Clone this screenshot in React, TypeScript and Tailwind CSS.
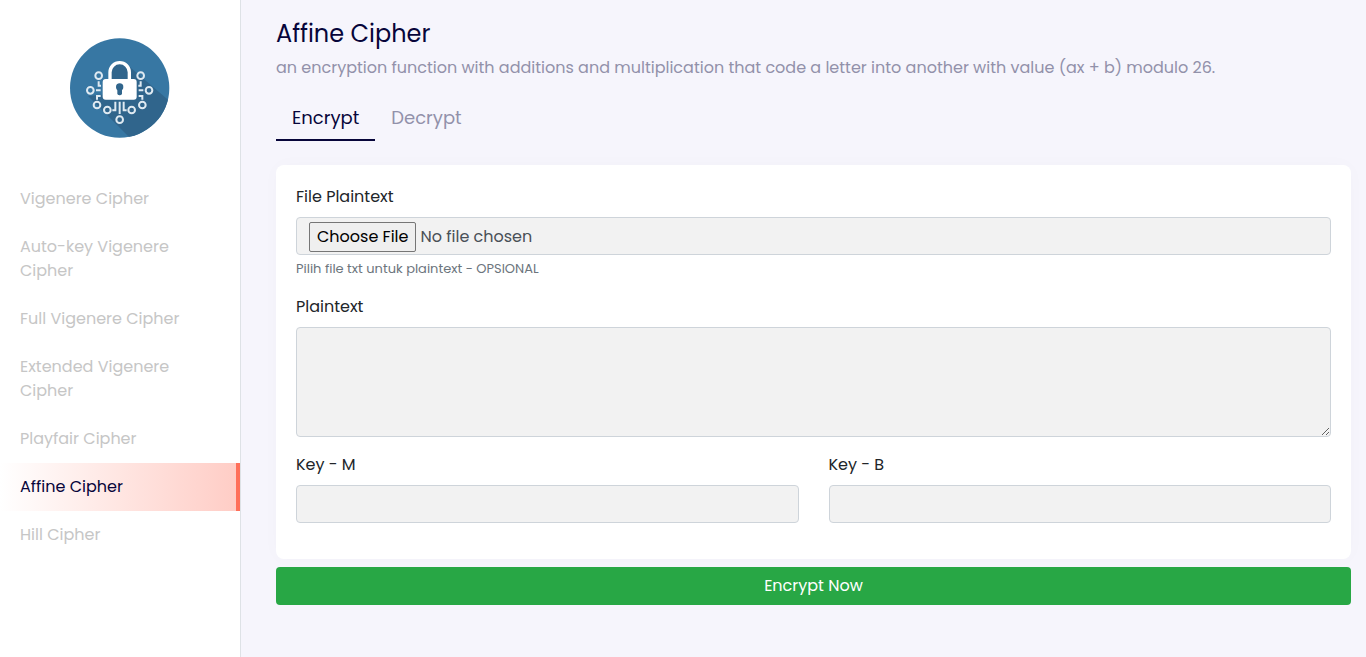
import { useState } from "react";

const ciphers = [
  "Vigenere Cipher",
  "Auto-key Vigenere Cipher",
  "Full Vigenere Cipher",
  "Extended Vigenere Cipher",
  "Playfair Cipher",
  "Affine Cipher",
  "Hill Cipher",
];

const fieldClass =
  "block w-full rounded border border-[#ced4da] bg-[#f2f2f2] px-3 text-[#495057] outline-none focus:border-[#80bdff]";

const nodes = [
  [116, 143],
  [242, 143],
  [91, 187],
  [267, 187],
  [111, 231],
  [247, 231],
  [142, 246],
  [215, 246],
  [179, 275],
];

function Logo() {
  return (
    <svg viewBox="0 0 300 300" className="size-[100px]" role="img" aria-label="Cipher tools">
      <defs>
        <clipPath id="disc">
          <circle cx="149" cy="150" r="149" />
        </clipPath>
      </defs>
      <g clipPath="url(#disc)">
        <rect width="300" height="300" fill="#3777a3" />
        <g transform="translate(-30 -30)">
          <path d="M207 115 L350 238 V350 H230 L84 204 L128 200 V155 H207Z" fill="#30658c" />
          <path d="M150 158 V133 a29 29 0 0 1 58 0 V158" fill="#30658c" />
          <path d="M150 158 V133 a29 29 0 0 1 58 0 V158" fill="none" stroke="#fff" strokeWidth="10" />
          <rect x="128" y="153" width="102" height="62" rx="9" fill="#fff" />
          <circle cx="179" cy="177" r="11" fill="#30658c" />
          <rect x="172" y="177" width="14" height="25" rx="6" fill="#30658c" />
          <g fill="none" stroke="#dfeaf2" strokeWidth="6">
            {nodes.map(([cx, cy]) => (
              <circle key={`${cx}-${cy}`} cx={cx} cy={cy} r="10" />
            ))}
            <path d="M116 160 V173 H123 M242 160 V173 H235 M108 187 H122 M236 187 H250 M111 215 V204 H122 M247 215 V204 H236" />
            <path d="M157 247 H166 V221 M179 221 V258 M200 247 H191 V221" />
          </g>
        </g>
      </g>
    </svg>
  );
}

export default function App() {
  const [active, setActive] = useState("Affine Cipher");
  const [mode, setMode] = useState("Encrypt");

  return (
    <div className="flex min-h-screen bg-[#f6f5fc] font-['Poppins','Inter',sans-serif] text-base leading-6 text-[#212529]">
      <aside className="w-[241px] shrink-0 border-r border-[#dee2e6] bg-white">
        <div className="flex justify-center pt-[38px] pb-[37px]">
          <Logo />
        </div>
        <nav className="flex flex-col">
          {ciphers.map((name) => (
            <a
              key={name}
              href="#"
              onClick={() => setActive(name)}
              aria-current={name === active ? "page" : undefined}
              className={
                name === active
                  ? "border-r-4 border-[#ff6f59] bg-linear-to-r from-white to-[#ffcdc6] py-3 pr-4 pl-5 text-[#07053a]"
                  : "py-3 pr-5 pl-5 text-[#c6c6c6]"
              }
            >
              {name}
            </a>
          ))}
        </nav>
      </aside>

      <main className="min-w-0 flex-1 pt-5 pr-[15px] pb-8 pl-[35px]">
        <h1 className="text-2xl leading-7 text-[#07053a]">Affine Cipher</h1>
        <p className="mt-2 text-[#9291aa]">
          an encryption function with additions and multiplication that code a letter into another with value (ax + b) modulo 26.
        </p>

        <div role="tablist" className="mt-3 flex text-lg leading-[27px]">
          {["Encrypt", "Decrypt"].map((label) => (
            <button
              key={label}
              type="button"
              role="tab"
              aria-selected={label === mode}
              onClick={() => setMode(label)}
              className={
                label === mode
                  ? "border-b-2 border-[#07053a] px-4 pt-3 pb-2 text-[#07053a]"
                  : "border-b-2 border-transparent px-4 pt-3 pb-2 text-[#9291aa]"
              }
            >
              {label}
            </button>
          ))}
        </div>

        <form className="mt-6" onSubmit={(event) => event.preventDefault()}>
          <div className="flex flex-col gap-4 rounded-lg bg-white px-5 pt-5 pb-9 shadow-[0_0_20px_rgba(7,5,58,0.02)]">
            <div>
              <label htmlFor="file" className="mb-2 block">File Plaintext</label>
              <input
                id="file"
                type="file"
                aria-describedby="file-help"
                className={`${fieldClass} h-[38px] py-1 file:mr-1 file:h-[30px] file:rounded-xs file:border file:border-[#767676] file:bg-[#efefef] file:px-[7px] file:text-black`}
              />
              <small id="file-help" className="mt-1 block text-[13px] leading-5 text-[#6c757d]">
                Pilih file txt untuk plaintext - OPSIONAL
              </small>
            </div>
            <div>
              <label htmlFor="plaintext" className="mb-2 block">Plaintext</label>
              <textarea id="plaintext" rows={4} className={`${fieldClass} h-[110px] resize py-1.5`} />
            </div>
            <div className="grid grid-cols-2 gap-[30px]">
              <div>
                <label htmlFor="key-m" className="mb-2 block">Key - M</label>
                <input id="key-m" type="text" className={`${fieldClass} h-[38px]`} />
              </div>
              <div>
                <label htmlFor="key-b" className="mb-2 block">Key - B</label>
                <input id="key-b" type="text" className={`${fieldClass} h-[38px]`} />
              </div>
            </div>
          </div>
          <button type="submit" className="mt-2 h-[38px] w-full rounded bg-[#28a745] text-white">
            {mode} Now
          </button>
        </form>
      </main>
    </div>
  );
}
